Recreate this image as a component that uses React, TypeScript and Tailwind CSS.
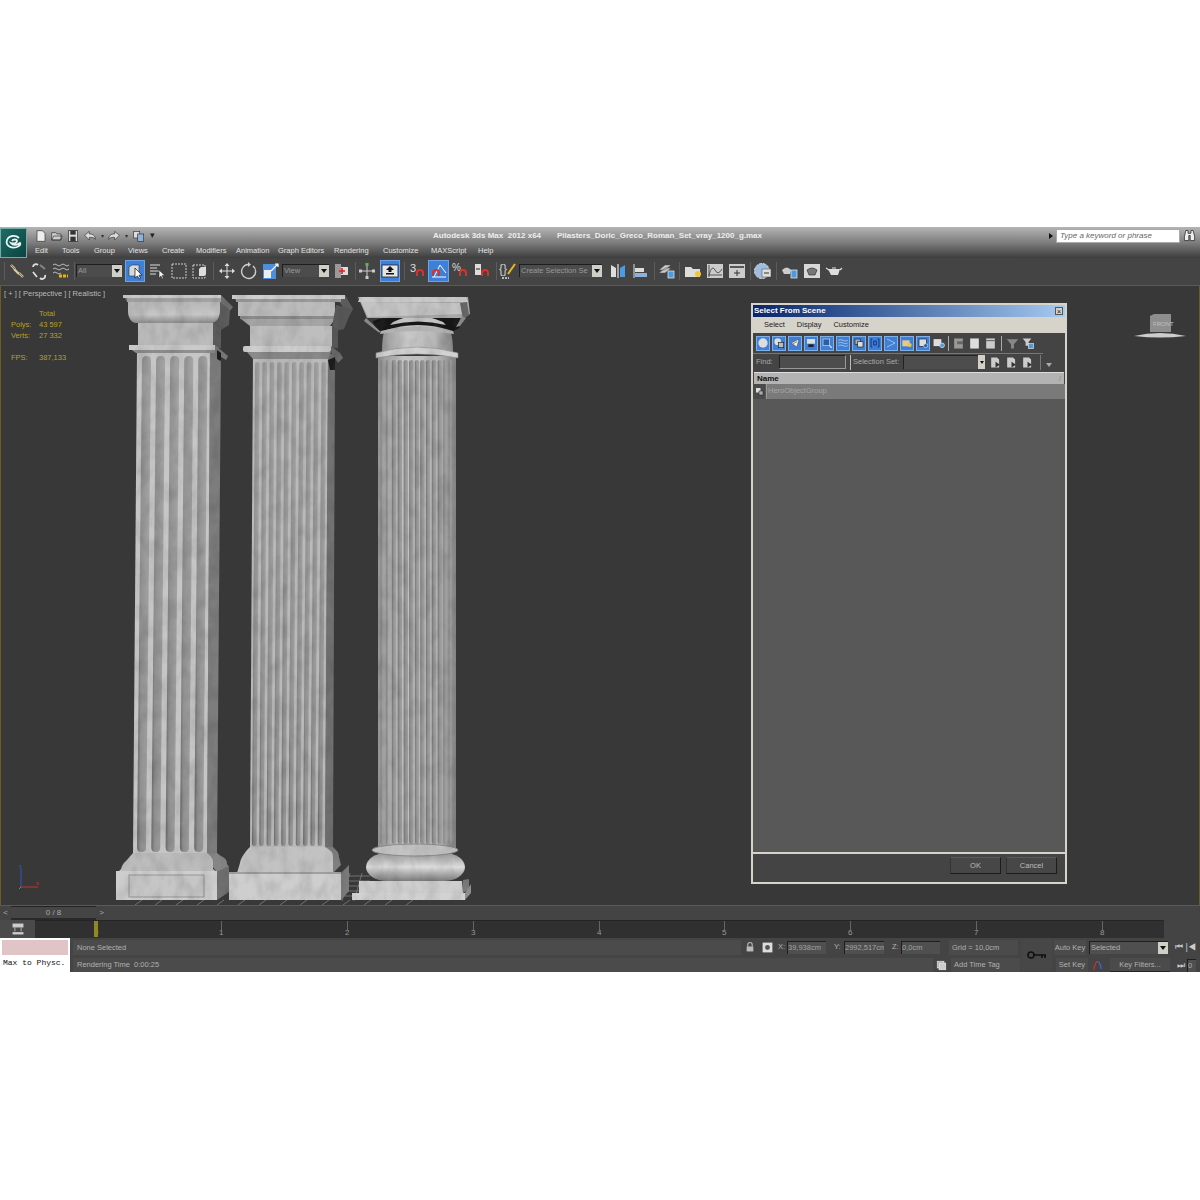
import type { ReactNode } from "react";

const UI = { fontFamily: '"Liberation Sans", "Noto Sans", sans-serif' };

const menus = [
  { label: "Edit", w: "w-[27px]" },
  { label: "Tools", w: "w-[32px]" },
  { label: "Group", w: "w-[34px]" },
  { label: "Views", w: "w-[34px]" },
  { label: "Create", w: "w-[34px]" },
  { label: "Modifiers", w: "w-[40px]" },
  { label: "Animation", w: "w-[42px]" },
  { label: "Graph Editors", w: "w-[56px]" },
  { label: "Rendering", w: "w-[49px]" },
  { label: "Customize", w: "w-[48px]" },
  { label: "MAXScript", w: "w-[47px]" },
  { label: "Help", w: "w-[20px]" },
];

const ticks = [
  { n: 0, x: "left-[61px]" },
  { n: 1, x: "left-[186px]" },
  { n: 2, x: "left-[312px]" },
  { n: 3, x: "left-[438px]" },
  { n: 4, x: "left-[564px]" },
  { n: 5, x: "left-[689px]" },
  { n: 6, x: "left-[815px]" },
  { n: 7, x: "left-[941px]" },
  { n: 8, x: "left-[1067px]" },
];

function Ico({ children, size = 18 }: { children: ReactNode; size?: number }) {
  return (
    <svg width={size} height={size} viewBox="0 0 18 18" fill="none" className="block shrink-0">
      {children}
    </svg>
  );
}

function Tool({ w = "w-[22px]", active, children }: { w?: string; active?: boolean; children: ReactNode }) {
  return (
    <div className={`${w} h-[22px] shrink-0 flex items-center justify-center ${active ? "bg-[#3d7fd9] border border-[#6ea2e6]" : ""}`}>
      {children}
    </div>
  );
}

function Sep({ w = "w-[6px]" }: { w?: string }) {
  return (
    <div className={`${w} h-[18px] shrink-0 flex justify-center`}>
      <div className="w-px h-full bg-[#222] border-r border-[#5c5c5c]" />
    </div>
  );
}

function Drop({ w, text }: { w: string; text: string }) {
  return (
    <div className={`${w} h-[13px] shrink-0 flex bg-[#4c4c4c] border-t border-l border-[#1e1e1e]`}>
      <span className="flex-1 pl-px text-[7.5px] leading-[12px] text-[#999] whitespace-nowrap overflow-hidden">{text}</span>
      <div className="w-[10px] h-full bg-[#cfcfc8] flex items-center justify-center">
        <div className="w-0 h-0 border-l-[3px] border-r-[3px] border-t-[4px] border-l-transparent border-r-transparent border-t-[#111]" />
      </div>
    </div>
  );
}

function Magnet({ x = 9, y = 12 }: { x?: number; y?: number }) {
  return <path d={`M${x - 3} ${y + 4}v-3a3 3 0 0 1 6 0v3`} stroke="#d8322c" strokeWidth="2" />;
}

function Toolbar() {
  return (
    <div className="h-[27px] bg-[#444] flex items-center pl-[3px] pb-[2px] shrink-0">
      <Sep w="w-[3px]" />
      <Tool>
        <Ico>
          <path d="M3 3l4 4M6 7l5 5M11 11l4 4" stroke="#d9c9a0" strokeWidth="2.4" />
          <path d="M3 3l4 4M11 11l4 4" stroke="#555" strokeWidth="0.8" />
        </Ico>
      </Tool>
      <Tool>
        <Ico>
          <path d="M3 5a3 3 0 0 1 5-2M15 13a3 3 0 0 1-5 3M3 10l4 5" stroke="#ddd" strokeWidth="1.8" />
          <path d="M10 3l5 4" stroke="#888" strokeWidth="1.8" />
        </Ico>
      </Tool>
      <Tool>
        <Ico>
          <path d="M1 3q2-2 4 0t4 0t4 0t4 0M1 7q2-2 4 0t4 0t4 0t4 0M1 11q2-2 4 0t4 0" stroke="#bbb" strokeWidth="1" />
          <path d="M7 14h9" stroke="#e2b80f" strokeWidth="3" strokeDasharray="3 1" />
        </Ico>
      </Tool>
      <Sep w="w-[4px]" />
      <Drop w="w-[46px]" text="All" />
      <div className="w-[3px] shrink-0" />
      <Tool w="w-[20px]" active>
        <Ico>
          <path d="M3 5l3-2h7v9l-3 2H3z" fill="#d8d8d8" stroke="#333" strokeWidth="0.6" />
          <path d="M9 6l0 10 2.500-2 1.500 3 1.500-.8-1.500-3h3z" fill="#fff" stroke="#111" strokeWidth="0.7" />
        </Ico>
      </Tool>
      <div className="w-[1px] shrink-0" />
      <Tool>
        <Ico>
          <path d="M2 3h10M2 6h7M2 9h9M2 12h6" stroke="#ddd" />
          <path d="M11 8l0 8 2-2 1 3 1.200-.6-1-3h2.600z" fill="#eee" stroke="#222" strokeWidth="0.5" />
        </Ico>
      </Tool>
      <Tool w="w-[21px]">
        <Ico>
          <rect x="2" y="2" width="14" height="14" stroke="#ccc" strokeDasharray="2 1" />
        </Ico>
      </Tool>
      <Tool>
        <Ico>
          <rect x="2" y="3" width="12" height="13" stroke="#ccc" strokeDasharray="2 1" />
          <path d="M8 7l2-2h5v7l-2 2H8z" fill="#ddd" />
        </Ico>
      </Tool>
      <Sep w="w-[5px]" />
      <Tool>
        <Ico>
          <path d="M9 1l2.500 3h-5zM9 17l2.500-3h-5zM1 9l3-2.500v5zM17 9l-3-2.500v5z" fill="#ddd" />
          <path d="M2 9h14M9 2v14" stroke="#ddd" />
        </Ico>
      </Tool>
      <Tool>
        <Ico>
          <path d="M13 4a7 7 0 1 1-5-1.500" stroke="#ccc" strokeWidth="1.4" />
          <path d="M8 0l3 2.500L8 5z" fill="#ccc" />
        </Ico>
      </Tool>
      <Tool>
        <Ico>
          <rect x="1" y="2" width="13" height="15" fill="#4c8fdc" />
          <rect x="2" y="8" width="7" height="8" fill="#eee" />
          <path d="M9 9l7-7M13 2h3v3" stroke="#fff" strokeWidth="1.2" />
        </Ico>
      </Tool>
      <Drop w="w-[47px]" text="View" />
      <div className="w-[2px] shrink-0" />
      <Tool>
        <Ico>
          <rect x="2" y="2" width="6" height="14" fill="#999" />
          <rect x="8" y="5" width="7" height="8" fill="#ddd" />
          <path d="M6 9h6M9 6v6" stroke="#e02020" strokeWidth="1.6" />
        </Ico>
      </Tool>
      <Sep w="w-[4px]" />
      <Tool w="w-[20px]">
        <Ico>
          <path d="M2 9h14M9 2v14" stroke="#ccc" />
          <rect x="7.500" y="1" width="3" height="3" fill="#5dbb3f" />
          <rect x="1" y="7.500" width="3" height="3" fill="#ccc" />
          <rect x="14" y="7.500" width="3" height="3" fill="#ccc" />
          <rect x="7.500" y="14" width="3" height="3" fill="#ccc" />
        </Ico>
      </Tool>
      <div className="w-[3px] shrink-0" />
      <Tool w="w-[20px]" active>
        <Ico>
          <rect x="1" y="3" width="16" height="12" fill="#e6e6e6" stroke="#222" strokeWidth="0.8" />
          <path d="M9 4l4 4h-2.500v2h-3V8H5z" fill="#111" />
          <rect x="5" y="11" width="8" height="1.500" fill="#111" />
        </Ico>
      </Tool>
      <Sep w="w-[8px]" />
      <Tool w="w-[20px]">
        <Ico>
          <text x="1" y="10" fontSize="11" fill="#ddd" fontFamily="Liberation Sans">3</text>
          <Magnet x={11} y={10} />
        </Ico>
      </Tool>
      <Tool w="w-[21px]" active>
        <Ico>
          <path d="M2 15h14M4 15L10 3l6 8" stroke="#fff" strokeWidth="1" />
          <Magnet x={6} y={10} />
        </Ico>
      </Tool>
      <Tool w="w-[22px]">
        <Ico>
          <text x="1" y="9" fontSize="10" fill="#ddd" fontFamily="Liberation Sans">%</text>
          <Magnet x={12} y={10} />
        </Ico>
      </Tool>
      <Tool w="w-[22px]">
        <Ico>
          <rect x="2" y="2" width="6" height="11" fill="#ddd" />
          <path d="M3 7h4" stroke="#222" />
          <Magnet x={12} y={10} />
        </Ico>
      </Tool>
      <Sep w="w-[6px]" />
      <Tool w="w-[18px]">
        <Ico>
          <text x="0" y="11" fontSize="12" fill="#ccc" fontFamily="Liberation Sans">{"{}"}</text>
          <path d="M9 12L16 2" stroke="#e9b923" strokeWidth="2" />
          <path d="M3 16h7" stroke="#bbb" strokeDasharray="2 1" strokeWidth="2" />
        </Ico>
      </Tool>
      <div className="w-[2px] shrink-0" />
      <Drop w="w-[83px]" text="Create Selection Se" />
      <div className="w-[5px] shrink-0" />
      <Tool>
        <Ico>
          <path d="M2 3l5 3v9H2z" fill="#ddd" />
          <path d="M16 3l-5 3v9h5z" fill="#4c9be0" />
          <path d="M9 2v14" stroke="#fff" />
        </Ico>
      </Tool>
      <Tool>
        <Ico>
          <path d="M3 2v14" stroke="#ddd" />
          <rect x="4" y="6" width="9" height="4" fill="#ddd" />
          <rect x="4" y="11" width="12" height="4" fill="#8cb1dc" />
        </Ico>
      </Tool>
      <Sep />
      <Tool w="w-[20px]">
        <Ico>
          <path d="M1 8l6-5h6l-6 5zM1 11l6-5h6l-6 5z" fill="#ccc" stroke="#444" strokeWidth="0.5" />
          <rect x="10" y="9" width="6" height="7" fill="#4c9be0" stroke="#eee" strokeWidth="0.7" />
        </Ico>
      </Tool>
      <Sep w="w-[5px]" />
      <Tool>
        <Ico>
          <path d="M1 5h6l2 2h7v8H1z" fill="#ddd" />
          <circle cx="14" cy="12" r="3" fill="#f0c63a" />
        </Ico>
      </Tool>
      <Tool w="w-[22px]">
        <Ico>
          <rect x="1" y="2" width="16" height="14" fill="#ccc" />
          <path d="M3 3v12M2 13h14" stroke="#555" />
          <path d="M3 13q3-11 6-5t7-1" stroke="#555" />
        </Ico>
      </Tool>
      <Tool w="w-[22px]">
        <Ico>
          <rect x="1" y="2" width="16" height="14" fill="#ccc" />
          <rect x="2" y="4" width="14" height="2" fill="#555" />
          <path d="M6 11h6M9 8v6" stroke="#333" />
        </Ico>
      </Tool>
      <Sep w="w-[4px]" />
      <Tool w="w-[22px]">
        <Ico>
          <circle cx="8" cy="9" r="7.500" fill="#9cbce0" stroke="#ddd" strokeDasharray="3 1" />
          <rect x="8" y="7" width="9" height="8" fill="#ddd" stroke="#444" strokeWidth="0.5" />
          <path d="M10 11h5" stroke="#333" />
        </Ico>
      </Tool>
      <Sep w="w-[5px]" />
      <Tool w="w-[22px]">
        <Ico>
          <path d="M1 8q5-5 9 0l-1 4H3z" fill="#ccc" />
          <rect x="10" y="8" width="6" height="8" fill="#4c9be0" stroke="#eee" strokeWidth="0.7" />
        </Ico>
      </Tool>
      <Tool w="w-[22px]">
        <Ico>
          <rect x="1" y="2" width="16" height="14" fill="#d8d8d8" />
          <path d="M4 8q5-4 10 0l-2 5H6z" fill="#777" stroke="#222" strokeWidth="0.6" />
        </Ico>
      </Tool>
      <Tool w="w-[22px]">
        <Ico>
          <path d="M3 7h12l-2 6H6z" fill="#ddd" />
          <path d="M1 6l3 2M15 8l2-2M7 6h4" stroke="#ddd" strokeWidth="1.2" />
        </Ico>
      </Tool>
    </div>
  );
}

function TopBar() {
  return (
    <div className="h-[31px] shrink-0 flex bg-gradient-to-b from-[#b5b5b5] via-[#7e7e7e] to-[#3e3e3e]">
      <div className="w-[27px] h-[30px] mt-px bg-gradient-to-br from-[#1d6c66] to-[#0b4440] border border-[#7da9a5] flex items-center justify-center">
        <svg width="20" height="20" viewBox="0 0 20 20" fill="none">
          <path d="M15 5C12 2 5 2 3 7c-2 6 5 9 10 7c3-1 4-3 3-4c-2 2-7 3-9 0c3 1 6 0 6-2c0-2-4-2-5 0" stroke="#e8f4f2" strokeWidth="1.800" />
        </svg>
      </div>
      <div className="flex-1 flex flex-col min-w-0">
        <div className="h-[17px] flex items-center">
          <div className="w-[8px] shrink-0" />
          <Ico size={12}>
            <path d="M3 1h8l4 4v12H3z" fill="#eee" stroke="#333" />
          </Ico>
          <div className="w-[4px] shrink-0" />
          <Ico size={12}>
            <path d="M1 15V4h6l2 2h6v9zM4 9h13l-3 6H1z" fill="#ccc" stroke="#333" />
          </Ico>
          <div className="w-[4px] shrink-0" />
          <Ico size={12}>
            <rect x="2" y="1" width="14" height="16" fill="#ddd" stroke="#222" />
            <rect x="5" y="1" width="8" height="6" fill="#333" />
            <rect x="5" y="10" width="8" height="7" fill="#333" />
          </Ico>
          <div className="w-[5px] shrink-0" />
          <Ico size={12}>
            <path d="M1 8l7-6v4c5 0 9 2 9 8c-2-3-5-3-9-3v4z" fill="#ddd" stroke="#333" />
          </Ico>
          <span className="w-[12px] text-center text-[6px] leading-none text-[#333]">▾</span>
          <Ico size={12}>
            <path d="M17 8l-7-6v4c-5 0-9 2-9 8c2-3 5-3 9-3v4z" fill="#ddd" stroke="#333" />
          </Ico>
          <span className="w-[13px] text-center text-[6px] leading-none text-[#333]">▾</span>
          <Ico size={12}>
            <rect x="1" y="2" width="9" height="10" fill="#ddd" stroke="#333" />
            <rect x="7" y="6" width="9" height="11" fill="#8cb1dc" stroke="#333" />
          </Ico>
          <span className="w-[14px] text-center text-[9px] leading-none text-[#222]">▾</span>
          <div className="w-[274px] shrink-0" />
          <span className="w-[124px] shrink-0 text-[8px] font-bold text-[#eee] whitespace-nowrap">Autodesk 3ds Max&nbsp; 2012 x64</span>
          <span className="w-[492px] shrink-0 text-[8px] font-bold text-[#eee] whitespace-nowrap">Pilasters_Doric_Greco_Roman_Set_vray_1200_g.max</span>
          <div className="w-0 h-0 border-y-[3px] border-l-[4px] border-y-transparent border-l-[#111] shrink-0" />
          <div className="w-[3px] shrink-0" />
          <div className="w-[124px] h-[14px] shrink-0 bg-white border border-[#aaa] text-[8px] leading-[12px] italic text-[#666] pl-[3px] whitespace-nowrap">Type a keyword or phrase</div>
          <div className="w-[3px] shrink-0" />
          <Ico size={13}>
            <path d="M4 2h3v4h4V2h3l2 8v6H10V9H8v7H2v-6z" fill="#eee" stroke="#222" />
          </Ico>
        </div>
        <div className="h-[14px] flex items-start pl-[8px]">
          {menus.map((m) => (
            <div key={m.label} className={`${m.w} shrink-0 text-[7.5px] leading-[14px] text-[#e2e2e2] whitespace-nowrap`}>
              {m.label}
            </div>
          ))}
        </div>
      </div>
    </div>
  );
}

function Flute({ xt, xb, w, yt, yb, id = "flute" }: { xt: number; xb: number; w: number; yt: number; yb: number; id?: string }) {
  const r = w / 2;
  return (
    <path
      d={`M${xb} ${yb - r}L${xt} ${yt + r}Q${xt} ${yt} ${xt + r} ${yt}Q${xt + w} ${yt} ${xt + w} ${yt + r}L${xb + w} ${yb - r}Q${xb + w} ${yb} ${xb + r} ${yb}Q${xb} ${yb} ${xb} ${yb - r}Z`}
      fill={`url(#${id})`}
    />
  );
}

function Columns() {
  return (
    <svg className="absolute inset-0" width="1198" height="619" viewBox="1 286 1198 619" fill="none">
      <defs>
        <linearGradient id="flute" x1="0" x2="1" y1="0" y2="0">
          <stop offset="0" stopColor="#6a6a6a" />
          <stop offset="0.25" stopColor="#909090" />
          <stop offset="1" stopColor="#a6a6a6" />
        </linearGradient>
        <linearGradient id="ogee" x1="0" x2="0" y1="0" y2="1">
          <stop offset="0" stopColor="#b8b8b8" />
          <stop offset="0.6" stopColor="#c6c6c6" />
          <stop offset="1" stopColor="#8c8c8c" />
        </linearGradient>
        <linearGradient id="drum" x1="0" x2="1" y1="0" y2="0">
          <stop offset="0" stopColor="#969696" />
          <stop offset="0.35" stopColor="#c8c8c8" />
          <stop offset="0.75" stopColor="#b8b8b8" />
          <stop offset="1" stopColor="#848484" />
        </linearGradient>
        <linearGradient id="torus" x1="0" x2="0" y1="0" y2="1">
          <stop offset="0" stopColor="#9a9a9a" />
          <stop offset="0.5" stopColor="#dcdcdc" />
          <stop offset="1" stopColor="#7c7c7c" />
        </linearGradient>
        <filter id="marble" x="0" y="0" width="100%" height="100%">
          <feTurbulence type="fractalNoise" baseFrequency="0.08 0.05" numOctaves="3" seed="4" result="n" />
          <feColorMatrix in="n" type="matrix" values="0 0 0 0 0  0 0 0 0 0  0 0 0 0 0  0.45 0 0 0 -0.17" result="spots" />
          <feComposite in="spots" in2="SourceAlpha" operator="in" result="clipped" />
          <feMerge result="m">
            <feMergeNode in="SourceGraphic" />
            <feMergeNode in="clipped" />
          </feMerge>
          <feGaussianBlur in="m" stdDeviation="0.45" />
        </filter>
      </defs>

      {/* ground grid */}
      <g stroke="#8a8a8a" strokeWidth="0.7">
        {[135, 155, 176, 197, 217, 238, 259, 280, 300, 322, 343, 364, 385, 406].map((x) => (
          <path key={x} d={`M${x} 905l7-5`} />
        ))}
        {[876, 881, 886, 891, 896].map((y) => (
          <path key={y} d={`M338 ${y}h32`} />
        ))}
        <path d="M350 873l-8 28M362 873l-8 28" />
      </g>

      <g filter="url(#marble)">
        {/* first pilaster */}
        <path d="M210 352h11l-4 501h-10z" fill="#7d7d7d" />
        <path d="M137 352h73l-3 503h-74z" fill="#c6c6c6" />
        {[0, 1, 2, 3, 4].map((i) => (
          <Flute key={i} xt={142 + i * 14.1} xb={137 + i * 14.3} w={9} yt={356} yb={852} />
        ))}
        <path d="M123 295h98l12 12-4 5-8-6-2-4H127z" fill="#6f6f6f" />
        <rect x="123" y="295" width="98" height="3" fill="#cacaca" />
        <rect x="127" y="298" width="94" height="4" fill="#a2a2a2" />
        <path d="M128 302h92v10c0 6-4 11-8 11h-76c-5 0-8-6-8-12z" fill="url(#ogee)" />
        <path d="M220 302l10 8-1 15-13 8-3-10c5-2 7-6 7-12z" fill="#5d5d5d" />
        <rect x="138" y="323" width="75" height="22" fill="#bcbcbc" />
        <path d="M213 323l8 7v18h-8z" fill="#626262" />
        <rect x="129" y="345" width="86" height="5" fill="#cacaca" />
        <path d="M132 350h83v3h-79z" fill="#8f8f8f" />
        <path d="M215 345l13 11-2 4-11-7z" fill="#7b7b7b" />
        <path d="M217 350l4 3v8l-4-2z" fill="#222" />
        <path d="M207 853h10l4 3c4 2 6 4 6 8l2 3-12 5-5-6z" fill="#858585" />
        <path d="M133 853h74c3 2 6 5 6 9v7l4 3H118l3-3c1-3 2-6 5-8z" fill="#bcbcbc" />
        <rect x="116" y="871" width="101" height="29" fill="#cecece" />
        <rect x="129" y="875" width="75" height="22" fill="#c6c6c6" stroke="#969696" />
        <path d="M217 872l12-6v26l-12 8z" fill="#707070" />

        {/* second pilaster */}
        <path d="M328 354h7l-2 494h-8z" fill="#727272" />
        <path d="M253 354h75l-3 494h-75z" fill="#bababa" />
        {[0, 1, 2, 3, 4, 5, 6, 7, 8, 9].map((i) => (
          <Flute key={i} xt={255 + i * 7.4} xb={252 + i * 7.3} w={4.6} yt={362} yb={846} />
        ))}
        <path d="M232 295h113l8 14-5 9-4-9-5-8H236z" fill="#616161" />
        <rect x="232" y="295" width="113" height="4" fill="#cecece" />
        <rect x="236" y="299" width="105" height="3" fill="#9a9a9a" />
        <rect x="238" y="302" width="97" height="14" fill="#bcbcbc" />
        <rect x="240" y="316" width="96" height="3" fill="#8c8c8c" />
        <path d="M241 319h94l-5 7h-80z" fill="#a5a5a5" />
        <path d="M336 305l16 4-8 20-13 3z" fill="#5b5b5b" />
        <rect x="250" y="326" width="82" height="21" fill="#bebebe" />
        <path d="M332 326l6 4v18h-6z" fill="#585858" />
        <rect x="243" y="346" width="88" height="6" rx="2" fill="#cecece" />
        <path d="M247 352h84l-3 7h-75z" fill="#8a8a8a" />
        <path d="M331 346l9 7 3 5-5 5-7-11z" fill="#6b6b6b" />
        <path d="M328 360l7-3v13h-5z" fill="#222" />
        <path d="M325 847h8l3 3c2 2 3 4 3 7l2 8-8 8-8-8z" fill="#808080" />
        <path d="M250 847h75c3 2 8 4 8 9v17h-96l3-10c1-6 6-12 10-16z" fill="#c2c2c2" />
        <rect x="229" y="873" width="112" height="27" fill="#cecece" />
        <path d="M229 872h112v2H229z" fill="#a0a0a0" />
        <path d="M341 873l8-8v26l-8 9z" fill="#7c7c7c" />

        {/* round column */}
        <rect x="378" y="356" width="78" height="492" fill="url(#drum)" />
        {[-0.92, -0.78, -0.62, -0.46, -0.3, -0.15, 0, 0.15, 0.3, 0.46, 0.62, 0.78, 0.92].map((t) => (
          <Flute key={t} xt={417 + t * 37 - 2.2} xb={417 + t * 37 - 2.2} w={t * t > 0.5 ? 2.6 : 4.4} yt={360} yb={844} />
        ))}
        <path d="M382 352c0-14 2-25 6-27h58c5 3 7 13 7 27z" fill="url(#drum)" />
        <path d="M376 353q41-12 82 0v5q-41-8-82 0z" fill="#d2d2d2" stroke="#8c8c8c" strokeWidth="0.6" />
        <path d="M373 321q43-16 90-3l-4 10-6 3q-35-12-70 0l-6 1z" fill="#1e1e1e" />
        <path d="M393 322q24-12 50 0l3 3q-28-7-56 0z" fill="#c4c4c4" />
        <path d="M381 331q35-9 72 0l1 3q-38-6-74 0z" fill="#b2b2b2" />
        <path d="M358 297h110l2 17-6 4H367z" fill="#a8a8a8" />
        <path d="M360 297h106l2 5H358z" fill="#cacaca" />
        <path d="M361 302l99 1 3 11-95 3z" fill="#c4c4c4" />
        <path d="M460 303l7-1 2 13-6 4z" fill="#666" />
        <path d="M366 318l16 15-4-1-14-11zM462 316l-6 11 4-1 6-8z" fill="#8c8c8c" />
        <path d="M359 881h103l1 12H359z" fill="#cecece" />
        <path d="M463 880l6-1v10l-6 4z" fill="#7e7e7e" />
        <rect x="352" y="893" width="113" height="7" fill="#d2d2d2" />
        <path d="M465 893l6-9v9l-6 7z" fill="#8d8d8d" />
        <rect x="366" y="853" width="99" height="28" rx="21" ry="14" fill="url(#torus)" />
        <ellipse cx="415" cy="850" rx="43" ry="6" fill="#c4c4c4" stroke="#8c8c8c" />
      </g>

      {/* axis tripod */}
      <path d="M21 887V868" stroke="#2f55c9" />
      <path d="M21 887h17" stroke="#c9322f" />
      <path d="M21 887l-2 2" stroke="#3fb24a" />
      <text x="19" y="868" fontSize="6" fill="#2f55c9">z</text>
      <text x="36" y="885" fontSize="6" fill="#c9322f">x</text>

      {/* view cube */}
      <path d="M1150 316l4-2h17v18h-21z" fill="#8e8e8e" />
      <path d="M1134 336q26-6 52 0q-26 3-52 0z" fill="#ccc" />
      <text x="1153" y="326" fontSize="6" fill="#c0c0c0">FRONT</text>
    </svg>
  );
}

function DialogIcons() {
  return (
    <div className="h-[20px] shrink-0 flex items-center pl-[3px]">
      <div className="flex gap-[2px]">
        {[
          <circle key="a" cx="9" cy="9" r="7" fill="#ddd" />,
          <g key="b"><circle cx="7" cy="7" r="5" fill="#ddd" /><rect x="8" y="8" width="8" height="8" fill="#bbb" stroke="#222" /></g>,
          <path key="c" d="M3 9l12-6-3 12zM6 10l6-3" fill="#eee" stroke="#555" />,
          <g key="d"><rect x="3" y="3" width="12" height="7" fill="#ddd" /><rect x="5" y="11" width="8" height="4" fill="#222" /></g>,
          <g key="e"><rect x="3" y="3" width="10" height="10" fill="#2a5fa8" stroke="#ddd" /><path d="M13 13l3 3" stroke="#ddd" strokeWidth="2" /></g>,
          <path key="f" d="M2 5q3-2 7 0t7 0M2 9q3-2 7 0t7 0M2 13q3-2 7 0t7 0" stroke="#ddd" />,
          <g key="g"><rect x="3" y="3" width="8" height="8" fill="#aaa" stroke="#222" /><rect x="7" y="7" width="8" height="8" fill="#ddd" stroke="#222" /></g>,
          <path key="h" d="M5 3H3v12h2M13 3h2v12h-2M7 6h4v6H7z" stroke="#14367a" strokeWidth="1.5" />,
          <path key="i" d="M3 3l12 6-12 6" stroke="#ddd" />,
          <g key="j"><rect x="2" y="5" width="11" height="9" fill="#e8c98a" /><circle cx="13" cy="12" r="3" fill="#f0c63a" /></g>,
          <g key="k"><rect x="3" y="3" width="11" height="11" fill="#ddd" stroke="#222" /><circle cx="13" cy="13" r="3" fill="#2a5fa8" stroke="#ddd" /></g>,
        ].map((g, i) => (
          <div key={i} className="w-[14px] h-[15px] bg-[#3d7fd9] border border-[#7fb0ea] flex items-center justify-center">
            <Ico size={12}>{g}</Ico>
          </div>
        ))}
      </div>
      <div className="ml-[2px]">
        <Ico size={14}>
          <rect x="2" y="4" width="10" height="9" fill="#ddd" />
          <circle cx="13" cy="12" r="3" fill="#4c9be0" stroke="#ddd" />
        </Ico>
      </div>
      <div className="w-[1px] h-[15px] bg-[#aaa] ml-[2px] mr-[3px]" />
      <Ico size={13}><path d="M3 2h12v14H3z" fill="#999" /><path d="M7 6h8v4H7z" fill="#666" /></Ico>
      <div className="w-[3px]" />
      <Ico size={13}><rect x="3" y="2" width="12" height="14" fill="#ddd" /></Ico>
      <div className="w-[3px]" />
      <Ico size={13}><path d="M3 2h12v14H3z" fill="#ccc" /><path d="M3 5h12" stroke="#666" strokeWidth="1.5" /></Ico>
      <div className="w-[1px] h-[15px] bg-[#aaa] mx-[4px]" />
      <Ico size={13}><path d="M1 3h16l-6 7v6H7v-6z" fill="#888" /></Ico>
      <div className="w-[3px]" />
      <Ico size={13}><path d="M1 2h12l-4 5v5H5V7z" fill="#ccc" /><rect x="9" y="9" width="7" height="7" fill="#4c9be0" stroke="#ddd" /></Ico>
    </div>
  );
}

function SelectDialog() {
  return (
    <div className="absolute left-[750px] top-[17px] w-[316px] h-[581px] flex flex-col bg-[#d6d3cb] p-[2px]">
      <div className="h-[12px] shrink-0 bg-gradient-to-r from-[#0a246a] to-[#a6caf0] flex items-center justify-between pl-[1px] pr-[2px]">
        <span className="text-[8px] font-bold text-white leading-none">Select From Scene</span>
        <div className="w-[8px] h-[8px] bg-[#d4d0c8] border border-[#555] flex items-center justify-center text-[7px] leading-none text-[#111]">×</div>
      </div>
      <div className="h-[16px] shrink-0 flex items-center pl-[11px] gap-[12px] text-[7.5px] text-[#222]">
        <span>Select</span>
        <span>Display</span>
        <span>Customize</span>
      </div>
      <div className="flex-1 flex flex-col bg-[#444] min-h-0">
        <DialogIcons />
        <div className="h-[17px] shrink-0 flex items-center pl-[3px] border-t border-[#777] w-[290px]">
          <span className="text-[7.5px] text-[#aaa] w-[23px] shrink-0">Find:</span>
          <div className="w-[67px] h-[14px] shrink-0 bg-[#4d4d4d] border border-[#222] border-r-[#999] border-b-[#999]" />
          <div className="w-px h-[15px] shrink-0 bg-[#bbb] ml-[4px] mr-[2px]" />
          <span className="text-[7.5px] text-[#aaa] w-[50px] shrink-0 whitespace-nowrap">Selection Set:</span>
          <div className="w-[75px] h-[14px] shrink-0 bg-[#4d4d4d] border-t border-l border-[#222]" />
          <div className="w-[7px] h-[14px] shrink-0 bg-[#d4d0c8] flex items-center justify-center">
            <div className="w-0 h-0 border-x-[2px] border-t-[3px] border-x-transparent border-t-[#111]" />
          </div>
          <div className="flex ml-[4px] gap-[3px] shrink-0">
            {[0, 1, 2].map((i) => (
              <Ico key={i} size={13}><path d="M3 2h8l3 3v11H3z" fill="#ccc" /><path d="M9 8l6 4-6 4z" fill="#333" /></Ico>
            ))}
          </div>
          <div className="w-px h-[15px] shrink-0 bg-[#777] ml-[6px]" />
          <div className="ml-[5px] mt-[6px] w-0 h-0 shrink-0 border-x-[3px] border-t-[4px] border-x-transparent border-t-[#aaa]" />
        </div>
        <div className="h-[12px] shrink-0 mt-[2px] bg-[#b3b3b3] border-t border-[#ddd] flex items-center justify-between pl-[3px] pr-[3px] mx-[1px]">
          <span className="text-[8px] font-bold text-[#111] leading-none">Name</span>
          <span className="text-[7px] text-[#888] leading-none">/</span>
        </div>
        <div className="flex-1 bg-[#585858] min-h-0">
          <div className="h-[15px] flex">
            <div className="w-[12px] bg-[#4a4a4a] flex items-center justify-center">
              <Ico size={9}><rect x="2" y="2" width="9" height="9" fill="#ddd" /><rect x="8" y="8" width="8" height="8" fill="#aaa" stroke="#222" /></Ico>
            </div>
            <div className="flex-1 ml-px bg-[#7a7a7a] border-l border-[#999] pl-px text-[7.5px] leading-[14px] text-[#a6a6a6]">HeroObjectGroup</div>
          </div>
        </div>
        <div className="h-[2px] shrink-0 bg-[#d6d3cb]" />
        <div className="h-[28px] shrink-0 flex items-start justify-end gap-[5px] pt-[3px] pr-[8px] bg-[#444]">
          {["OK", "Cancel"].map((b) => (
            <div key={b} className="w-[51px] h-[17px] bg-[#474747] border-r border-b border-[#1c1c1c] border-t border-l border-t-[#5a5a5a] border-l-[#333] text-center text-[7.5px] leading-[15px] text-[#bbb]">
              {b}
            </div>
          ))}
        </div>
      </div>
    </div>
  );
}

function Viewport() {
  return (
    <div className="relative h-[621px] shrink-0 bg-[#383838] border border-[#6d5c22]">
      <Columns />
      <div className="absolute left-[3px] top-[2px] text-[7.5px] leading-[12px] text-[#b9b9b9] whitespace-nowrap">[ + ] [ Perspective ] [ Realistic ]</div>
      <div className="absolute left-[10px] top-[22px] grid grid-cols-[28px_40px] text-[7.5px] leading-[11px] text-[#b7a21c]">
        <span />
        <span>Total</span>
        <span>Polys:</span>
        <span>43 597</span>
        <span>Verts:</span>
        <span>27 332</span>
        <span className="h-[11px]" />
        <span />
        <span>FPS:</span>
        <span>387,133</span>
      </div>
      <SelectDialog />
    </div>
  );
}

function Timeline() {
  return (
    <>
      <div className="h-[14px] shrink-0 bg-[#444] flex text-[8px] leading-[13px] text-[#aaa]">
        <div className="w-[11px] text-center">&lt;</div>
        <div className="w-[85px] bg-[#454545] border-t border-[#222] border-b-2 border-b-[#2a2a2a] text-center leading-[11px]">0 / 8</div>
        <div className="w-[11px] text-center">&gt;</div>
      </div>
      <div className="h-[18px] shrink-0 flex bg-[#444]">
        <div className="w-[35px] flex items-center justify-center bg-[#4a4a4a]">
          <Ico size={14}>
            <rect x="2" y="2" width="14" height="5" fill="#ccc" />
            <path d="M5 7v5M13 7v5" stroke="#ccc" />
            <rect x="2" y="13" width="14" height="3" fill="#ccc" />
          </Ico>
        </div>
        <div className="relative flex-1 bg-[#303030] mr-[36px] border-t border-[#252525]">
          {ticks.map((t) => (
            <div key={t.n} className={`absolute top-0 ${t.x} h-full text-[8px] text-[#999]`}>
              <div className="w-px h-[9px] bg-[#666]" />
              <span className="absolute top-[7px] -left-[2px] leading-[10px]">{t.n}</span>
            </div>
          ))}
          <div className="absolute left-[59px] top-0 w-[4px] h-[16px] bg-[#8f8a1f]" />
        </div>
      </div>
    </>
  );
}

function Field({ w, text }: { w: string; text: string }) {
  return (
    <div className={`${w} h-[13px] shrink-0 bg-[#4f4f4f] border-t border-l border-[#1e1e1e] text-[7.5px] leading-[12px] text-[#a3a3a3] overflow-hidden whitespace-nowrap`}>
      {text}
    </div>
  );
}

function StatusBar() {
  return (
    <div className="h-[34px] shrink-0 flex bg-[#444] text-[7.5px] text-[#b0b0b0] overflow-hidden">
      <div className="w-[70px] shrink-0 flex flex-col bg-white p-[2px] pb-0 mr-[3px]">
        <div className="h-[15px] bg-[#e0c4c6]" />
        <div className="mt-px h-[14px] pl-px text-[8px] leading-[14px] text-[#111] whitespace-nowrap" style={{ fontFamily: '"Liberation Mono", monospace' }}>
          Max to Physc.
        </div>
      </div>
      <div className="flex-1 flex flex-col min-w-0">
        <div className="h-[16px] mt-px flex items-center">
          <div className="w-[668px] h-[15px] shrink-0 bg-[#4b4b4b] pl-[4px] leading-[15px]">None Selected</div>
          <div className="w-[4px] shrink-0" />
          <Ico size={10}>
            <path d="M5 8V5a4 4 0 0 1 8 0v3" stroke="#bbb" strokeWidth="2" />
            <rect x="3" y="8" width="12" height="9" fill="#bbb" />
          </Ico>
          <div className="w-[7px] shrink-0" />
          <Ico size={11}>
            <rect x="1" y="1" width="16" height="16" fill="#ddd" />
            <circle cx="9" cy="9" r="4" fill="#555" />
          </Ico>
          <span className="w-[14px] pl-[5px] shrink-0">X:</span>
          <Field w="w-[39px]" text="39,938cm" />
          <span className="w-[18px] pl-[8px] shrink-0">Y:</span>
          <Field w="w-[40px]" text="2992,517cm" />
          <span className="w-[17px] pl-[8px] shrink-0">Z:</span>
          <Field w="w-[39px]" text="0,0cm" />
          <div className="w-[9px] shrink-0" />
          <div className="w-[69px] h-[15px] shrink-0 bg-[#4b4b4b] pl-[3px] leading-[15px] whitespace-nowrap">Grid = 10,0cm</div>
          <div className="w-[3px] shrink-0" />
          <div className="w-[31px] h-[32px] shrink-0 bg-[#474747] self-start flex items-center justify-center">
            <svg width="20" height="10" viewBox="0 0 20 10" fill="none">
              <circle cx="4" cy="5" r="3" stroke="#111" strokeWidth="1.600" />
              <path d="M7 5h12M15 5v3M18 5v3" stroke="#111" strokeWidth="1.600" />
            </svg>
          </div>
          <div className="w-[2px] shrink-0" />
          <div className="w-[32px] h-[15px] shrink-0 bg-[#4b4b4b] text-center leading-[15px] whitespace-nowrap">Auto Key</div>
          <div className="w-[3px] shrink-0" />
          <div className="w-[79px] h-[13px] shrink-0 bg-[#4f4f4f] border-t border-l border-[#1e1e1e] flex justify-between pl-px leading-[12px]">
            Selected
            <div className="w-[10px] h-full bg-[#cfcfc8] flex items-center justify-center">
              <div className="w-0 h-0 border-x-[3px] border-t-[4px] border-x-transparent border-t-[#111]" />
            </div>
          </div>
          <div className="w-[7px] shrink-0" />
          <span className="text-[9px] leading-none text-[#ccc] whitespace-nowrap">⏮ |◀</span>
        </div>
        <div className="h-[14px] mt-[3px] flex items-center">
          <div className="w-[860px] h-[14px] shrink-0 bg-[#4b4b4b] pl-[4px] leading-[14px]">Rendering Time&nbsp; 0:00:25</div>
          <div className="w-[3px] shrink-0" />
          <Ico size={11}>
            <rect x="2" y="2" width="11" height="11" fill="#aaa" stroke="#eee" />
            <rect x="5" y="5" width="11" height="11" fill="#ccc" stroke="#eee" />
          </Ico>
          <div className="w-[4px] shrink-0" />
          <div className="w-[69px] h-[14px] shrink-0 bg-[#4b4b4b] pl-[3px] leading-[14px] whitespace-nowrap">Add Time Tag</div>
          <div className="w-[36px] shrink-0" />
          <div className="w-[32px] h-[14px] shrink-0 bg-[#4b4b4b] text-center leading-[14px] whitespace-nowrap">Set Key</div>
          <div className="w-[4px] shrink-0" />
          <Ico size={14}>
            <path d="M2 15q3-12 6-10" stroke="#d8322c" strokeWidth="1.400" />
            <path d="M8 5q2 0 4 9" stroke="#3f6fd8" strokeWidth="1.400" />
          </Ico>
          <div className="w-[4px] shrink-0" />
          <div className="w-[60px] h-[14px] shrink-0 bg-[#4b4b4b] border-b border-[#222] text-center leading-[13px] whitespace-nowrap">Key Filters...</div>
          <div className="w-[7px] shrink-0" />
          <span className="text-[9px] leading-none text-[#ccc]">⏭</span>
          <div className="w-[9px] h-[13px] ml-[2px] shrink-0 bg-[#4f4f4f] border-t border-l border-[#1e1e1e] leading-[12px]">0</div>
        </div>
      </div>
    </div>
  );
}

export default function App() {
  return (
    <div className="w-[1200px] h-[1200px] bg-white overflow-hidden flex flex-col pt-[227px]" style={UI}>
      <TopBar />
      <Toolbar />
      <Viewport />
      <Timeline />
      <StatusBar />
    </div>
  );
}
